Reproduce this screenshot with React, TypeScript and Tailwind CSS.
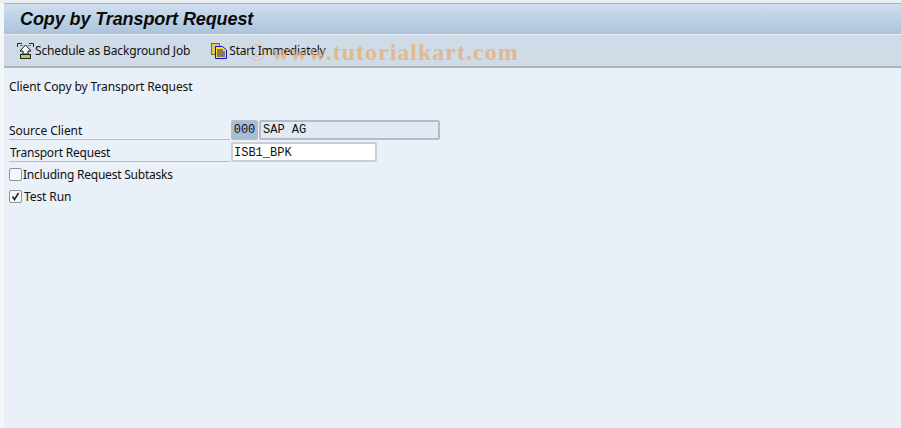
export default function App() {
  const mono = "font-['Liberation_Mono',monospace]";
  return (
    <div className="w-[901px] h-[428px] overflow-hidden bg-[#f4f6f8] pl-[4px] flex flex-col font-['Noto_Sans',sans-serif] relative">
      <div className="h-[3px] bg-[#eceff2] -ml-[4px] shrink-0" />
      <div className="h-[1px] bg-[#aab5c2] shrink-0" />
      <div className="h-[30px] shrink-0 bg-gradient-to-b from-[#cfdfee] to-[#abc3dc] flex items-center pl-[16px]">
        <span className="font-['Liberation_Sans',sans-serif] font-bold italic text-[18px] tracking-[-0.1px] text-[#0a0a0a]">Copy by Transport Request</span>
      </div>
      <div className="h-[1px] bg-[#e8eef4] shrink-0" />
      <div className="h-[33px] shrink-0 bg-[#cfdce7] border-b-2 border-[#a9b5c1] flex items-center text-[12px] text-[#111] pl-[13px] tracking-[-0.15px]">
        <svg width="17" height="16" viewBox="0 0 17 16" className="mr-[1px]">
          <path d="M0.5 4V0.5H5M12 0.5H16.5V4" fill="none" stroke="#222" />
          <path d="M6 2.5H3M11 2.5H14" stroke="#3a7fd0" />
          <path d="M8.5 2L14 8H11V11H6V8H3Z" fill="#fff" stroke="#111" />
          <rect x="3.5" y="11.5" width="10" height="4" fill="#b5d050" stroke="#222" />
        </svg>
        <span>Schedule as Background Job</span>
        <svg width="16" height="16" viewBox="0 0 16 16" className="ml-[21px] mr-[2px]">
          <rect x="0.5" y="0.5" width="8" height="11" fill="#d8c868" stroke="#666" />
          <path d="M4.5 3.5H11.5L15.5 7V15.5H4.5Z" fill="#ffe000" stroke="#1010d0" />
          <path d="M6 7H12M6 9H14M6 11H14M6 13H14" stroke="#1010d0" />
        </svg>
        <span className="tracking-[-0.28px]">Start Immediately</span>
      </div>
      <div className="flex-1 bg-[#e9f0f7] text-[12px] text-[#111] pl-[5px] relative">
        <div className="mt-[10px] h-[17px] leading-[17px] tracking-[-0.1px]">Client Copy by Transport Request</div>
        <div className="mt-[23px] flex h-[22px] pt-[4px] items-center border-b border-[#b5bfc9] w-[221px] tracking-[-0.05px]">
          <span>Source Client</span>
        </div>
        <div className="flex h-[22px] pt-[4px] pl-[1px] items-center border-b border-[#b5bfc9] w-[221px] tracking-[-0.2px]">
          <span>Transport Request</span>
        </div>
        <div className="flex h-[22px] pt-[3px] items-center">
          <span className="w-[13px] h-[13px] border border-[#8a949e] rounded-[2px] bg-[#f4f7fa] mr-[1px]" />
          <span className="tracking-[-0.22px]">Including Request Subtasks</span>
        </div>
        <div className="flex h-[22px] pt-[3px] items-center">
          <span className="w-[13px] h-[13px] border border-[#8a949e] rounded-[2px] bg-[#f4f7fa] mr-[2px] flex items-center justify-center">
            <svg width="11" height="11" viewBox="0 0 11 11"><path d="M2.5 5.5l2 3 4-6.5" fill="none" stroke="#222" strokeWidth="1.5" /></svg>
          </span>
          <span className="tracking-[-0.1px]">Test Run</span>
        </div>
        <div className={`absolute left-[227px] top-[52px] flex gap-[1px] text-[12px] ${mono}`}>
          <div className="w-[27px] h-[20px] border-2 border-[#b4bdc7] bg-[#a3bcd9] rounded-[2px] flex items-center justify-center">000</div>
          <div className="w-[181px] h-[20px] border-2 border-[#b4bdc7] bg-[#dfeaf5] rounded-[2px] flex items-center pl-[2px]">SAP AG</div>
        </div>
        <div className={`absolute left-[227px] top-[74px] w-[146px] h-[20px] border-2 border-[#c8cfd6] bg-white rounded-[2px] flex items-center pl-[1px] pt-[1px] text-[12px] ${mono}`}>ISB1_BPK</div>
      </div>
      <div className="absolute left-[272px] top-[38px] font-['Liberation_Serif',serif] font-bold text-[24px] leading-[28px] tracking-[1px] text-[#e8ab6a] opacity-70 whitespace-nowrap pointer-events-none">www.tutorialkart.com</div>
      <div className="absolute left-[248px] top-[44px] w-[17px] h-[17px] rounded-full border border-[#e8ab6a] opacity-60 text-[#e8ab6a] text-[11px] leading-[15px] text-center pointer-events-none">c</div>
    </div>
  );
}
